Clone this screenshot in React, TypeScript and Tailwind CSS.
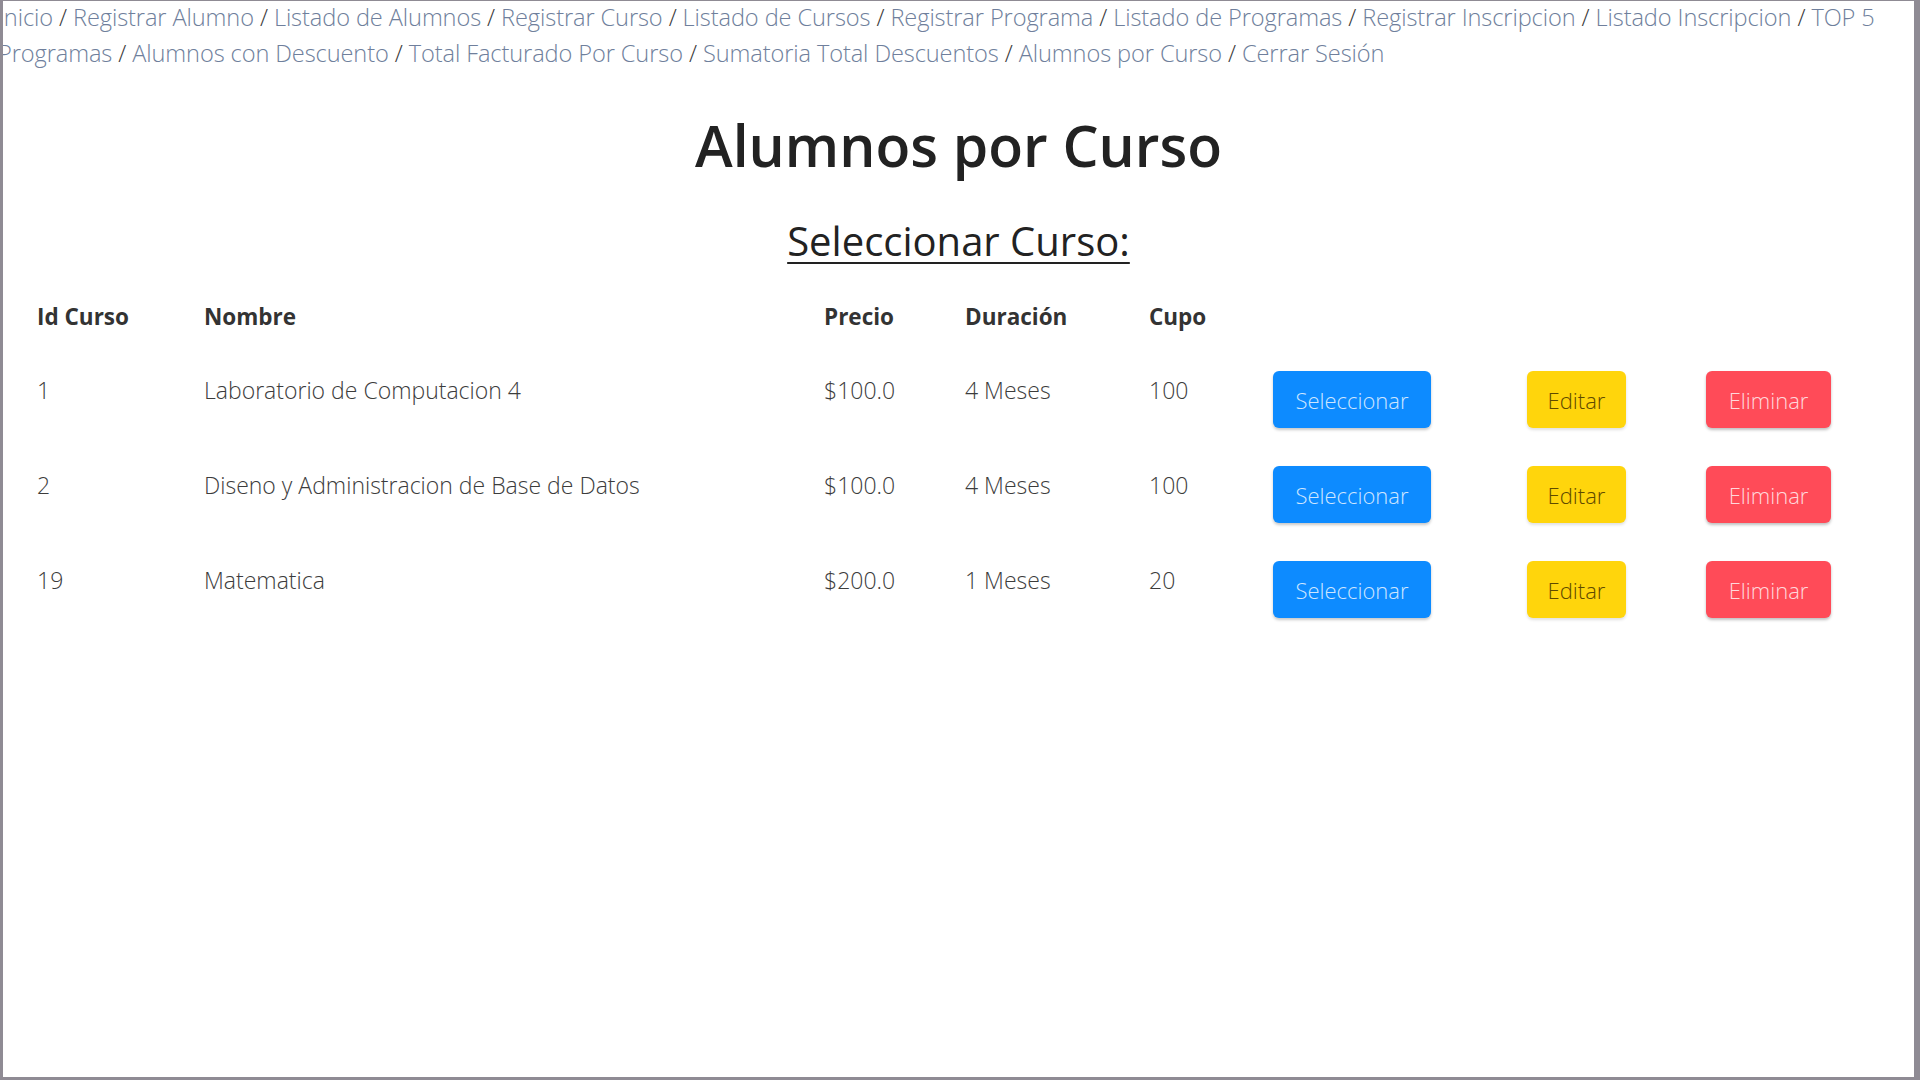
const links = [
  "Inicio",
  "Registrar Alumno",
  "Listado de Alumnos",
  "Registrar Curso",
  "Listado de Cursos",
  "Registrar Programa",
  "Listado de Programas",
  "Registrar Inscripcion",
  "Listado Inscripcion",
  "TOP 5",
];

const links2 = [
  "Programas",
  "Alumnos con Descuento",
  "Total Facturado Por Curso",
  "Sumatoria Total Descuentos",
  "Alumnos por Curso",
  "Cerrar Sesión",
];

const cursos = [
  { id: 1, nombre: "Laboratorio de Computacion 4", precio: "$100.0", duracion: "4 Meses", cupo: 100 },
  { id: 2, nombre: "Diseno y Administracion de Base de Datos", precio: "$100.0", duracion: "4 Meses", cupo: 100 },
  { id: 19, nombre: "Matematica", precio: "$200.0", duracion: "1 Meses", cupo: 20 },
];

const cols = "grid grid-cols-[167px_620px_141px_184px_124px_254px_179px_auto]";

function NavLine({ items }: { items: string[] }) {
  return (
    <div className="whitespace-nowrap">
      {items.map((l, i) => (
        <span key={l}>
          {i > 0 ? <span className="text-[#3a3a3a]"> / </span> : null}
          <a className="text-[#6f7f9c]">{l}</a>
        </span>
      ))}
    </div>
  );
}

export default function App() {
  return (
    <div className="w-[1920px] h-[1080px] overflow-hidden bg-white border-t border-l-[3px] border-r-[6px] border-b-[3px] border-[#8f8b94] font-['Open_Sans',sans-serif]">
      {/* menu */}
      <nav className="-ml-[5px] text-[23.6px] font-light leading-[36px] -mt-[2px] tracking-[-0.1px]">
        <NavLine items={links} />
        <NavLine items={links2} />
      </nav>

      <h1 className="mt-[38px] text-center text-[57px] font-semibold leading-[72px] text-[#222]">Alumnos por Curso</h1>
      <h2 className="mt-[36px] text-center text-[40px] font-medium leading-[48px] text-[#222]">
        <span className="underline underline-offset-[6px] decoration-2">Seleccionar Curso:</span>
      </h2>

      {/* tabla */}
      <div className="ml-[34px] mt-[37px] text-[#333]">
        <div className={`${cols} text-[22.5px] font-bold leading-[30px] h-[69px]`}>
          <div>Id Curso</div>
          <div>Nombre</div>
          <div>Precio</div>
          <div>Duración</div>
          <div>Cupo</div>
        </div>
        {cursos.map((c) => (
          <div key={c.id} className={`${cols} items-start h-[95px] text-[23px] font-light leading-[30px] text-[#3c3c3c]`}>
            <div className="pt-[4px]">{c.id}</div>
            <div className="pt-[4px]">{c.nombre}</div>
            <div className="pt-[4px]">{c.precio}</div>
            <div className="pt-[4px]">{c.duracion}</div>
            <div className="pt-[4px]">{c.cupo}</div>
            <div>
              <button className="w-[158px] h-[57px] rounded-[6px] bg-[#0d8bff] text-[22px] font-light text-[#cfe6ff] shadow-[0_2px_3px_rgba(0,0,0,0.22)]">
                Seleccionar
              </button>
            </div>
            <div>
              <button className="w-[99px] h-[57px] rounded-[6px] bg-[#ffd50c] text-[22px] font-light text-[#5f4a00] shadow-[0_2px_3px_rgba(0,0,0,0.12)]">
                Editar
              </button>
            </div>
            <div>
              <button className="w-[125px] h-[57px] rounded-[6px] bg-[#ff4b58] text-[22px] font-light text-[#ffd8dc] shadow-[0_2px_3px_rgba(0,0,0,0.25)]">
                Eliminar
              </button>
            </div>
          </div>
        ))}
      </div>
    </div>
  );
}
